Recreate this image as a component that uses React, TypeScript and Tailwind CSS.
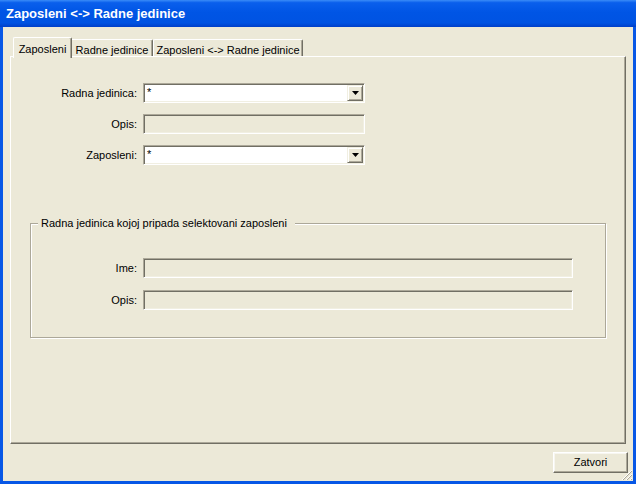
import React from "react";

const sunken =
  "border border-t-[#aca899] border-l-[#aca899] border-b-white border-r-white shadow-[inset_1px_1px_0_#716f64,inset_-1px_-1px_0_#f1efe2]";

function Combo({ value }: { value: string }) {
  return (
    <div className={`h-[20px] bg-white flex items-stretch ${sunken} p-[1px]`}>
      <div className="flex-1 pl-[2px] text-[11px] leading-[15px] text-black">{value}</div>
      <div className="w-[16px] bg-[#ece9d8] border border-t-[#f1efe2] border-l-[#f1efe2] border-b-[#716f64] border-r-[#716f64] shadow-[inset_1px_1px_0_#fff,inset_-1px_-1px_0_#aca899] flex items-center justify-center">
        <svg width="7" height="4" viewBox="0 0 7 4">
          <path d="M0 0h7L3.5 4z" fill="#000" />
        </svg>
      </div>
    </div>
  );
}

function Field() {
  return <div className={`h-[20px] bg-[#ece9d8] ${sunken}`} />;
}

function Label({ children }: { children: React.ReactNode }) {
  return <div className="text-right text-[11px] text-black leading-[13px]">{children}</div>;
}

export default function App() {
  return (
    <div className="w-[636px] h-[484px] flex flex-col overflow-hidden font-['Liberation_Sans',Arial,sans-serif] select-none">
      <div className="h-[27px] shrink-0 flex items-center pl-[6px] text-white font-bold text-[13px] bg-[linear-gradient(to_bottom,#3a8cf8_0%,#0a5fec_10%,#0055e5_45%,#0053e2_85%,#003fc8_100%)]">
        Zaposleni &lt;-&gt; Radne jedinice
      </div>
      <div className="flex-1 relative flex flex-col bg-[#ece9d8] border-x-[3px] border-b-[3px] border-[#0757e6] pt-[10px] px-[7px]">
        {/* tabs */}
        <div className="relative z-10 flex items-end h-[19px] pl-[3px] text-[11px] text-black">
          <div className="w-[59px] h-[21px] mb-[-2px] bg-[#ece9d8] border-t border-l border-r border-t-white border-l-white border-r-[#716f64] rounded-t-[2px] shadow-[inset_-1px_0_0_#aca899] flex justify-center pt-[3px]">
            Zaposleni
          </div>
          <div className="w-[81px] h-[17px] bg-[#ece9d8] border-t border-r border-t-white border-r-[#716f64] rounded-tr-[2px] shadow-[inset_-1px_0_0_#aca899] flex justify-center pt-[2px]">
            Radne jedinice
          </div>
          <div className="w-[150px] h-[17px] bg-[#ece9d8] border-t border-l border-r border-t-white border-l-white border-r-[#716f64] rounded-t-[2px] shadow-[inset_-1px_0_0_#aca899] flex justify-center pt-[2px]">
            Zaposleni &lt;-&gt; Radne jedinice
          </div>
        </div>
        {/* panel */}
        <div className="h-[388px] border border-t-white border-l-white border-b-[#716f64] border-r-[#716f64] shadow-[inset_-1px_-1px_0_#aca899] pt-[26px]">
          <div className="grid grid-cols-[126px_222px] gap-x-[6px] gap-y-[11px] items-center">
            <Label>Radna jedinica:</Label>
            <Combo value="*" />
            <Label>Opis:</Label>
            <Field />
            <Label>Zaposleni:</Label>
            <Combo value="*" />
          </div>
          <div className="relative mt-[58px] ml-[19px] w-[576px] h-[115px] border border-[#aca899] shadow-[1px_1px_0_#fff,inset_1px_1px_0_#fff] pt-[34px]">
            <span className="absolute -top-[7px] left-[7px] px-[3px] pr-[8px] bg-[#ece9d8] text-[11px] leading-[13px] text-black">
              Radna jedinica kojoj pripada selektovani zaposleni
            </span>
            <div className="grid grid-cols-[106px_430px] gap-x-[6px] gap-y-[12px] items-center">
              <Label>Ime:</Label>
              <Field />
              <Label>Opis:</Label>
              <Field />
            </div>
          </div>
        </div>
        {/* bottom */}
        <div className="flex justify-end mt-[8px] mr-[-2px]">
          <button className="w-[75px] h-[21px] bg-[#ece9d8] border border-t-[#fff] border-l-[#fff] border-b-[#716f64] border-r-[#716f64] shadow-[inset_-1px_-1px_0_#aca899,inset_1px_1px_0_#f7f6f0] text-[11px] text-black flex items-center justify-center">
            Zatvori
          </button>
        </div>
        <svg className="absolute right-0 bottom-0" width="12" height="12" viewBox="0 0 12 12">
          <g strokeWidth="1">
            <path d="M11 1L1 11" stroke="#fff" />
            <path d="M11 2L2 11" stroke="#aca899" />
            <path d="M11 5L5 11" stroke="#fff" />
            <path d="M11 6L6 11" stroke="#aca899" />
            <path d="M11 9L9 11" stroke="#fff" />
            <path d="M11 10L10 11" stroke="#aca899" />
          </g>
        </svg>
      </div>
    </div>
  );
}
